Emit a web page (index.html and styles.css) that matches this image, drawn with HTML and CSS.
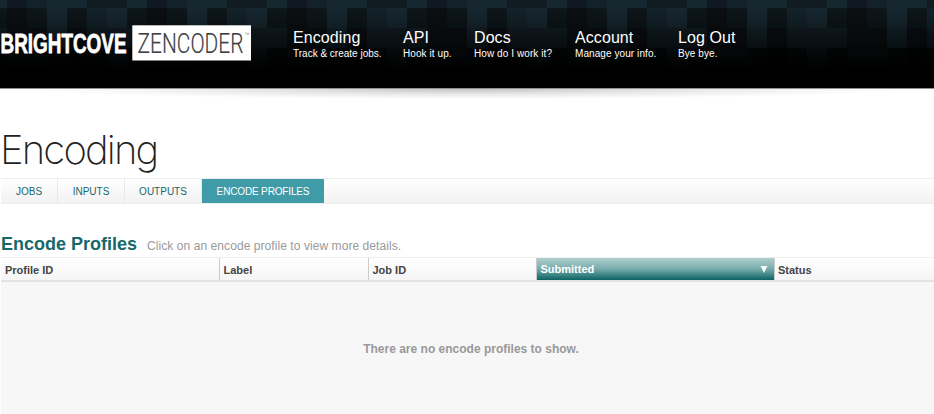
FILE: index.html
```html
<!DOCTYPE html>
<html lang="en">
<head>
<meta charset="utf-8">
<title>Encode Profiles</title>
<link rel="stylesheet" href="styles.css">
</head>
<body>
<header class="header">
  <svg class="tiles" aria-hidden="true">
    <defs>
      <pattern id="blocks" x="-53" y="0" width="140" height="88" patternUnits="userSpaceOnUse" shape-rendering="crispEdges">
        <rect width="140" height="88" fill="#101c22"/>
        <path fill="#17272f" d="M40 0h20v8H40zM100 0h40v8h-40zM20 8h20v20H20zM100 8h20v20h-20z"/>
        <path fill="#101923" d="M60 0h20v8H60z"/>
        <path fill="#13222a" d="M80 0h20v8H80zM0 8h20v20H0zM100 28h20v20h-20z"/>
        <path fill="#0d161a" d="M40 8h20v20H40zM80 8h20v20H80zM120 8h20v20h-20z"/>
        <path fill="#0b0f12" d="M60 8h20v20H60zM60 28h40v20H60zM120 28h20v20h-20z"/>
        <path fill="#121e24" d="M0 28h60v20H0z"/>
        <path fill="#070b0d" d="M0 48h20v20H0zM40 48h20v20H40zM100 48h20v20h-20z"/>
        <path fill="#111b20" d="M20 48h20v20H20z"/>
        <path fill="#0b1215" d="M60 48h40v20H60z"/>
        <path fill="#030506" d="M120 48h20v20h-20z"/>
      </pattern>
      <linearGradient id="fade" x2="0" y2="1">
        <stop offset="0.1" stop-color="#000" stop-opacity="0"/>
        <stop offset="0.45" stop-color="#000" stop-opacity="0.42"/>
        <stop offset="0.8" stop-color="#000"/>
      </linearGradient>
    </defs>
    <rect width="100%" height="88" fill="url(#blocks)"/>
    <rect width="100%" height="88" fill="url(#fade)"/>
  </svg>
  <svg class="logo" width="252" height="88" viewBox="0 0 252 88">
    <text class="brand" x="0.5" y="53" textLength="126" lengthAdjust="spacingAndGlyphs">BRIGHTCOVE</text>
    <rect x="132.3" y="25.3" width="118.7" height="35.2" fill="#fff"/>
    <text class="product" x="137.5" y="53" textLength="106" lengthAdjust="spacingAndGlyphs">ZENCODER</text>
    <text class="mark" x="244.5" y="35.5">™</text>
  </svg>
  <nav class="nav">
    <a class="item"><b>Encoding</b><span>Track &amp; create jobs.</span></a>
    <a class="item"><b>API</b><span>Hook it up.</span></a>
    <a class="item"><b>Docs</b><span>How do I work it?</span></a>
    <a class="item"><b>Account</b><span>Manage your info.</span></a>
    <a class="item"><b>Log Out</b><span>Bye bye.</span></a>
  </nav>
</header>
<div class="shadow"></div>
<main>
  <h1>Encoding</h1>
  <div class="tabs">
    <a class="jobs">JOBS</a><a class="inputs">INPUTS</a><a class="outputs">OUTPUTS</a><a class="active">ENCODE PROFILES</a>
  </div>
  <div class="heading"><h2>Encode Profiles</h2><p>Click on an encode profile to view more details.</p></div>
  <div class="columns">
    <div>Profile ID</div>
    <div>Label</div>
    <div>Job ID</div>
    <div class="sorted">Submitted<svg width="8" height="8" viewBox="0 0 8 8"><path d="M.5 1h7L4 8z" fill="#f4f8f8"/></svg></div>
    <div>Status</div>
  </div>
  <div class="empty">There are no encode profiles to show.</div>
</main>
</body>
</html>
```
FILE: styles.css
```css
* { box-sizing: border-box; }
body {
  margin: 0;
  height: 414px;
  overflow: hidden;
  background: #fff;
  font-family: "Liberation Sans", Arial, sans-serif;
}
.header {
  position: relative;
  display: flex;
  height: 88px;
  background: #000;
}
.tiles { position: absolute; inset: 0; width: 100%; height: 88px; }
.logo { position: relative; flex: none; }
.brand { font: bold 28px "Liberation Sans Narrow", "Liberation Sans", sans-serif; fill: #fff; stroke: #fff; stroke-width: .8px; }
.product { font: 300 28px Roboto, sans-serif; fill: #3c4145; stroke: #3c4145; stroke-width: .2px; }
.mark { font: 5px "Liberation Sans", sans-serif; fill: #888; }
.nav {
  position: relative;
  display: grid;
  grid-template-columns: 110px 71px 101px 103px auto;
  align-content: start;
  padding: 28px 0 0 41px;
  color: #fff;
}
.item { display: block; white-space: nowrap; }
.item b { display: block; font-size: 16px; line-height: 20px; font-weight: 400; letter-spacing: .08px; }
.item span { display: block; font-size: 10px; line-height: 12px; letter-spacing: .08px; }
.item:first-child span { letter-spacing: 0; }
.shadow {
  height: 11px;
  border-top: 1px solid #929292;
  background: radial-gradient(ellipse 430px 10px at 467px 0, #c4c4c4, #e7e7e7 50%, #fff);
}
main { padding-left: 1px; }
h1 {
  height: 79px;
  margin: 0 0 0 -1px;
  padding-top: 25px;
  font: 200 40px/52px Inter, sans-serif;
  letter-spacing: -1.85px;
  color: #222;
}
.tabs {
  display: flex;
  height: 26px;
  border: solid #eee;
  border-width: 1px 0;
  background: linear-gradient(#fff, #f2f2f2);
  font-size: 10px;
  line-height: 26px;
  color: #17686a;
  text-align: center;
}
.tabs a { border-right: 1px solid #e9e9e9; }
.jobs { width: 57px; }
.inputs { width: 67px; }
.outputs { width: 77px; }
.tabs .active { width: 122px; border: 0; background: #409ba9; color: #fff; letter-spacing: -.15px; }
.heading { display: flex; align-items: baseline; height: 53px; padding-top: 29px; }
h2 { margin: 0 10px 0 0; font-size: 18px; line-height: 22px; color: #17686a; white-space: nowrap; }
p { margin: 0; font-size: 12px; letter-spacing: .07px; color: #999; white-space: nowrap; }
.columns {
  display: grid;
  grid-template-columns: 219px 149px 168px 238px 1fr;
  height: 25px;
  border-top: 1px solid #eee;
  border-bottom: 2px solid #e3e3e3;
  background: linear-gradient(#fff, #f5f5f5);
  color: #444;
  font-size: 11px;
  font-weight: bold;
  line-height: 24px;
}
.columns div { height: 22px; padding-left: 4px; border-right: 1px solid #ccc; }
.columns div:nth-child(2), .columns div:nth-child(3), .columns .sorted { padding-left: 3.5px; }
.columns div:last-child { border: 0; padding-left: 3px; }
.columns .sorted {
  display: flex;
  justify-content: space-between;
  align-items: center;
  padding-right: 6px;
  color: #fff;
  background: linear-gradient(#b1d0d0, #77abab 50%, #0b6364);
}
.empty {
  height: 141px;
  padding: 59px 0 0 7px;
  background: #f7f7f7;
  color: #999;
  font-size: 12px;
  font-weight: bold;
  line-height: 16px;
  text-align: center;
}
```
